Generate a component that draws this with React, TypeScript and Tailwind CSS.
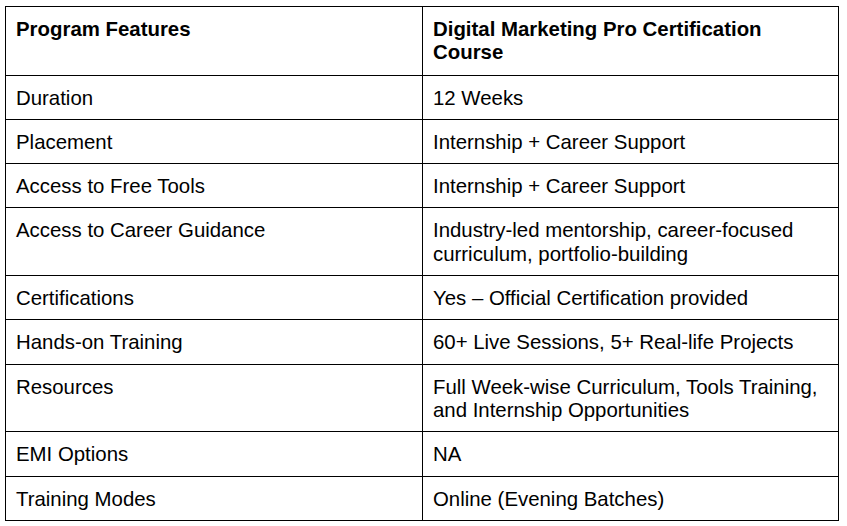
const rows: [string, string][] = [
  ['Duration', '12 Weeks'],
  ['Placement', 'Internship + Career Support'],
  ['Access to Free Tools', 'Internship + Career Support'],
  ['Access to Career Guidance', 'Industry-led mentorship, career-focused curriculum, portfolio-building'],
  ['Certifications', 'Yes – Official Certification provided'],
  ['Hands-on Training', '60+ Live Sessions, 5+ Real-life Projects'],
  ['Resources', 'Full Week-wise Curriculum, Tools Training, and Internship Opportunities'],
  ['EMI Options', 'NA'],
  ['Training Modes', 'Online (Evening Batches)'],
]

function Cell({ children, first, head }: { children: string; first?: boolean; head?: boolean }) {
  return (
    <div
      className={`border-b border-r border-black pl-[10px] pr-[10px] pt-[11px] ${head ? 'pb-[10px] font-bold' : 'pb-[9px]'} ${first ? 'w-[417px]' : 'w-[416px]'}`}
    >
      {children}
    </div>
  )
}

export default function App() {
  return (
    <div className="min-h-[526px] w-[847px] bg-white pl-[5px] pt-[6px] text-[20.4px] leading-[23.3px] text-black [font-family:'Liberation_Sans',Arial,sans-serif]">
      <div className="grid w-[834px] grid-cols-[417px_416px] border-l border-t border-black">
        <Cell first head>
          Program Features
        </Cell>
        <Cell head>Digital Marketing Pro Certification Course</Cell>
        {rows.map(([feature, value]) => (
          <div key={feature} className="contents">
            <Cell first>{feature}</Cell>
            <Cell>{value}</Cell>
          </div>
        ))}
      </div>
    </div>
  )
}
